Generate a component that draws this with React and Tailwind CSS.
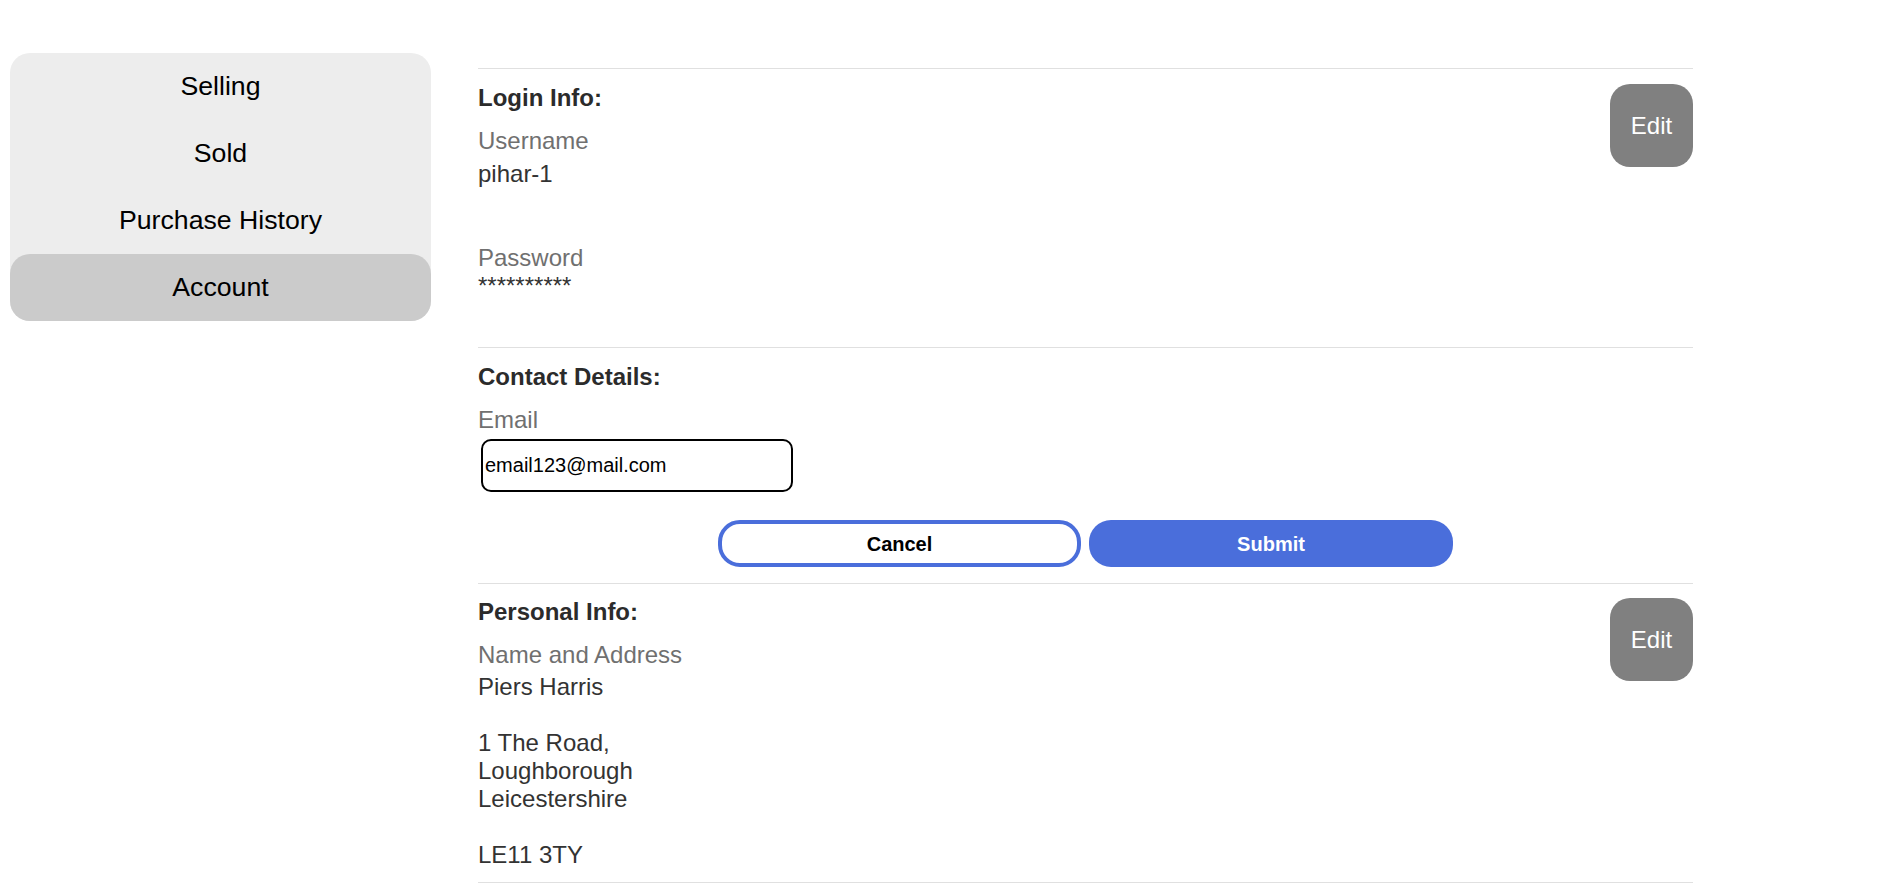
import React, { useState } from 'react';

const tabs = ['Selling', 'Sold', 'Purchase History', 'Account'];

const EditButton = () => (
  <button className="w-[83px] h-[83px] shrink-0 rounded-[20px] bg-[#808080] text-white text-[24px]">
    Edit
  </button>
);

const App = () => {
  const [active, setActive] = useState('Account');
  const [email, setEmail] = useState('email123@mail.com');

  return (
    <div className="min-h-screen bg-white flex items-start pt-[53px] pl-[10px] font-['Liberation_Sans',Arial,sans-serif]">
      {/* side menu */}
      <nav className="w-[421px] shrink-0 rounded-[20px] bg-[#ededed]">
        {tabs.map((t) => (
          <div
            key={t}
            onClick={() => setActive(t)}
            className={
              t === active
                ? 'h-[67px] flex items-center justify-center pb-[2px] rounded-[20px] bg-[#cbcbcb] text-[26.67px] text-black cursor-pointer'
                : 'h-[67px] flex items-center justify-center pb-[2px] text-[26.67px] text-black cursor-pointer'
            }
          >
            {t}
          </div>
        ))}
      </nav>

      <main className="ml-[47px] mt-[15px] w-[1215px] text-[24px] leading-[28px]">
        {/* login info */}
        <section className="border-t border-[#e0e0e0] pt-[15px] pb-[47px] flex justify-between">
          <div>
            <h3 className="font-bold text-[#2b2b2b]">Login Info:</h3>
            <div className="mt-[15px] text-[#707070]">Username</div>
            <div className="mt-[5px] text-[#333]">pihar-1</div>
            <div className="mt-[56px] text-[#707070]">Password</div>
            <div className="text-[#333]">**********</div>
          </div>
          <EditButton />
        </section>

        {/* contact details */}
        <section className="border-t border-[#e0e0e0] pt-[15px] pb-[16px]">
          <h3 className="font-bold text-[#2b2b2b]">Contact Details:</h3>
          <div className="mt-[15px] text-[#707070]">Email</div>
          <input
            value={email}
            onChange={(e) => setEmail(e.target.value)}
            className="mt-[5px] ml-[3px] w-[312px] h-[53px] border-2 border-black rounded-[10px] pl-[2px] text-[20px] text-black outline-none"
          />
          <div className="mt-[28px] flex justify-center gap-[8px]">
            <button className="w-[363px] h-[47px] rounded-[22px] border-4 border-[#4a6edb] bg-white text-[20px] font-bold text-black">
              Cancel
            </button>
            <button className="w-[364px] h-[47px] rounded-[22px] bg-[#4a6edb] text-[20px] font-bold text-white">
              Submit
            </button>
          </div>
        </section>

        {/* personal info */}
        <section className="border-t border-b border-[#e0e0e0] pt-[14px] pb-[13px] flex justify-between">
          <div>
            <h3 className="font-bold text-[#2b2b2b]">Personal Info:</h3>
            <div className="mt-[15px] text-[#707070]">Name and Address</div>
            <div className="mt-[4px] text-[#333] whitespace-pre-line">
              {'Piers Harris\n\n1 The Road,\nLoughborough\nLeicestershire\n\nLE11 3TY'}
            </div>
          </div>
          <EditButton />
        </section>
      </main>
    </div>
  );
};

export default App;
